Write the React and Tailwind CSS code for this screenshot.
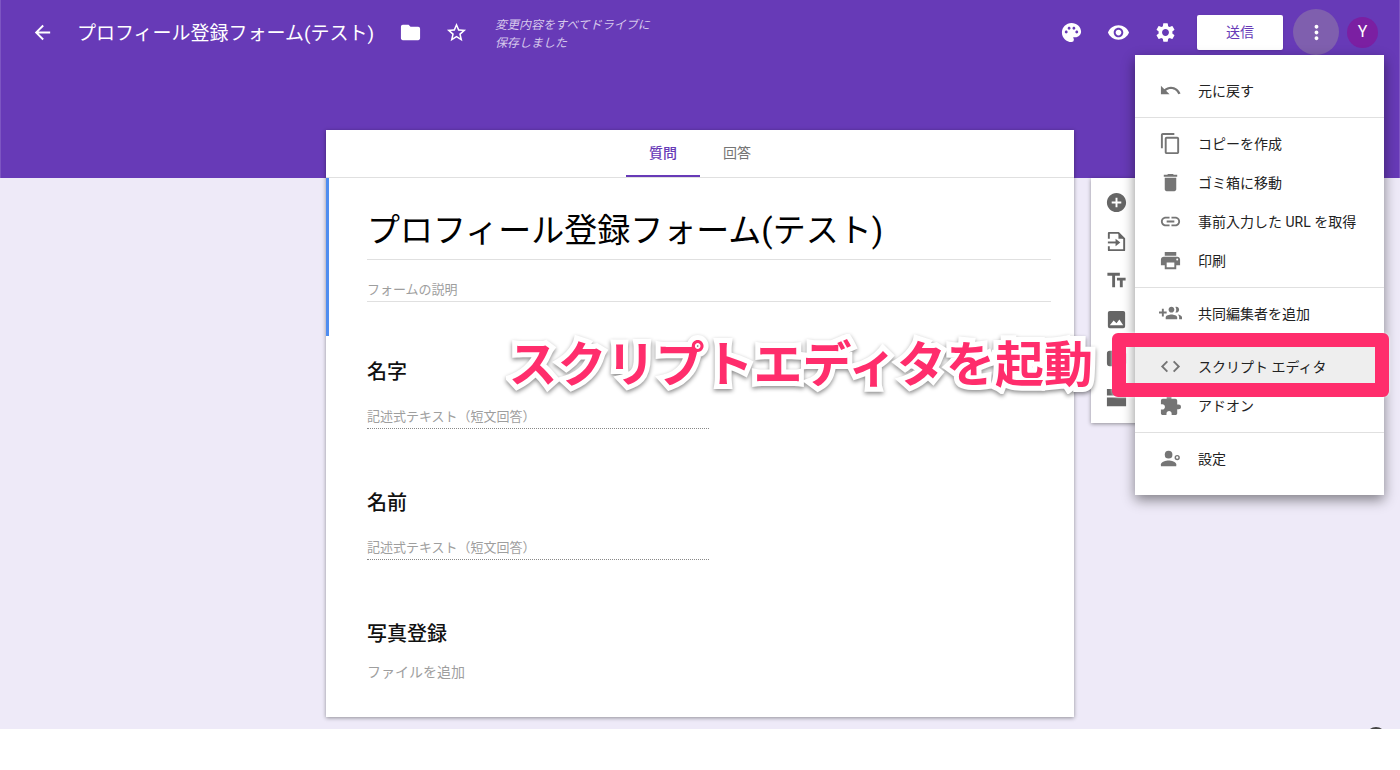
import React, { useState } from "react";
import {
    MdAddCircle,
    MdArrowBack,
    MdCode,
    MdContentCopy,
    MdDelete,
    MdExtension,
    MdFolder,
    MdHelp,
    MdLink,
    MdMoreVert,
    MdPalette,
    MdPrint,
    MdRemoveRedEye,
    MdSettings,
    MdStarBorder,
    MdTextFields,
    MdUndo,
} from "react-icons/md";

const FORM_TITLE = "プロフィール登録フォーム(テスト)";

const GroupAddIcon = ({ className }) => (
    <svg viewBox="0 0 24 24" fill="currentColor" className={className}>
        <path d="M8 10H5V7H3v3H0v2h3v3h2v-3h3v-2zm10 1c1.66 0 2.99-1.34 2.99-3S19.66 5 18 5c-.32 0-.63.05-.91.14.57.81.9 1.79.9 2.86s-.34 2.04-.9 2.86c.28.09.59.14.91.14zm-5 0c1.66 0 2.99-1.34 2.99-3S14.66 5 13 5c-1.66 0-3 1.34-3 3s1.34 3 3 3zm6.62 2.16c.83.73 1.38 1.66 1.38 2.84v2h3v-2c0-1.54-2.37-2.49-4.38-2.84zM13 13c-2 0-6 1-6 3v2h12v-2c0-2-4-3-6-3z" />
    </svg>
);

const PreferencesIcon = ({ className }) => (
    <svg viewBox="0 0 24 24" fill="currentColor" className={className}>
        <circle cx="10" cy="8" r="4" />
        <path d="M10 14c-2.67 0-8 1.34-8 4v2h16v-2c0-2.66-5.33-4-8-4z" />
        <circle cx="19" cy="11" r="2" fill="none" stroke="currentColor" strokeWidth="1.5" />
    </svg>
);

const ImportIcon = ({ className }) => (
    <svg viewBox="0 0 24 24" fill="none" stroke="currentColor" strokeWidth="2" className={className}>
        <path d="M4 9V3h10l6 6v12H4v-4" strokeLinejoin="round" />
        <path d="M14 3v6h6z" fill="currentColor" stroke="none" />
        <path d="M3 13h9" />
        <path d="M11 9l5 4-5 4z" fill="currentColor" stroke="none" />
    </svg>
);

const ImageIcon = ({ className }) => (
    <svg viewBox="0 0 24 24" fill="currentColor" className={className}>
        <path
            fillRule="evenodd"
            d="M5 3h14a2 2 0 0 1 2 2v14a2 2 0 0 1-2 2H5a2 2 0 0 1-2-2V5a2 2 0 0 1 2-2zm0 15h14l-4-6-3 4-3-3z"
        />
    </svg>
);

const VideoIcon = ({ className }) => (
    <svg viewBox="0 0 24 24" fill="currentColor" className={className}>
        <path fillRule="evenodd" d="M5 4h14a3 3 0 0 1 3 3v10a3 3 0 0 1-3 3H5a3 3 0 0 1-3-3V7a3 3 0 0 1 3-3zm5 4v8l6-4z" />
    </svg>
);

const SectionIcon = ({ className }) => (
    <svg viewBox="0 0 24 24" fill="currentColor" className={className}>
        <path d="M2 3h20v7H2zM2 12h20v9H2z" />
    </svg>
);

const tools = [
    { label: "質問を追加", icon: MdAddCircle },
    { label: "質問をインポート", icon: ImportIcon },
    { label: "タイトルと説明を追加", icon: MdTextFields },
    { label: "画像を追加", icon: ImageIcon },
    { label: "動画を追加", icon: VideoIcon },
    { label: "セクションを追加", icon: SectionIcon },
];

const menuGroups = [
    [{ label: "元に戻す", icon: MdUndo }],
    [
        { label: "コピーを作成", icon: MdContentCopy },
        { label: "ゴミ箱に移動", icon: MdDelete },
        { label: "事前入力した URL を取得", icon: MdLink },
        { label: "印刷", icon: MdPrint },
    ],
    [{ label: "共同編集者を追加", icon: GroupAddIcon }],
    [
        { label: "スクリプト エディタ", icon: MdCode, highlighted: true },
        { label: "アドオン", icon: MdExtension },
    ],
    [{ label: "設定", icon: PreferencesIcon }],
];

function Header() {
    const [title, setTitle] = useState(FORM_TITLE);

    return (
        <header className="flex h-16 items-center pl-[30px] pr-[21px] text-white">
            <div className="flex items-center gap-[23px]">
                <button aria-label="戻る">
                    <MdArrowBack className="size-[23px]" />
                </button>
                <input
                    aria-label="フォーム名"
                    value={title}
                    onChange={(e) => setTitle(e.target.value)}
                    className="w-[299px] bg-transparent pt-1 text-[19px] outline-none"
                />
                <button aria-label="フォルダに移動">
                    <MdFolder className="size-[23px]" />
                </button>
                <button aria-label="スターを付ける">
                    <MdStarBorder className="size-[23px]" />
                </button>
                <p className="ml-1 w-40 pt-1 text-xs leading-[18px] text-[#d6c8ec] italic">
                    変更内容をすべてドライブに保存しました
                </p>
            </div>
            <div className="ml-auto flex items-center">
                <div className="flex gap-6">
                    <button aria-label="テーマ">
                        <MdPalette className="size-[23px]" />
                    </button>
                    <button aria-label="プレビュー">
                        <MdRemoveRedEye className="size-[23px]" />
                    </button>
                    <button aria-label="設定">
                        <MdSettings className="size-[23px]" />
                    </button>
                </div>
                <button className="ml-5 h-[35px] w-[86px] rounded-xs bg-white text-sm text-[#673ab7] shadow">
                    送信
                </button>
                <button
                    aria-label="その他"
                    className="ml-[10px] flex size-[46px] items-center justify-center rounded-full bg-[#7f5fae]"
                >
                    <MdMoreVert className="size-[23px]" />
                </button>
                <button
                    aria-label="アカウント"
                    className="ml-2 size-[31px] rounded-full bg-[#7b1fa2] text-base"
                >
                    Y
                </button>
            </div>
        </header>
    );
}

function Question({ title }) {
    return (
        <label className="block h-[131px] pt-[21px] pl-[41px]">
            <span className="block text-xl leading-[30px] font-medium text-[#111]">{title}</span>
            <input
                placeholder="記述式テキスト（短文回答）"
                className="mt-4 block h-[26px] w-[342px] border-b border-dotted border-[#888] pt-[2px] text-[13px] outline-none placeholder:text-[#9e9e9e]"
            />
        </label>
    );
}

function FormCard() {
    const [title, setTitle] = useState(FORM_TITLE);
    const [activeTab, setActiveTab] = useState("questions");

    return (
        <div className="bg-white shadow-[0_1px_4px_rgba(0,0,0,0.4)]">
            <div className="flex h-12 justify-center border-b border-[#e0e0e0] text-sm">
                {[
                    ["questions", "質問"],
                    ["responses", "回答"],
                ].map(([id, label]) => (
                    <button
                        key={id}
                        onClick={() => setActiveTab(id)}
                        className={`w-[74px] border-b-2 ${
                            activeTab === id
                                ? "border-[#673ab7] font-medium text-[#673ab7]"
                                : "border-transparent text-[#757575]"
                        }`}
                    >
                        {label}
                    </button>
                ))}
            </div>
            <div className="border-l-3 border-[#4f8df0] pt-[25px] pr-[23px] pb-[34px] pl-[38px]">
                <input
                    aria-label="フォームのタイトル"
                    value={title}
                    onChange={(e) => setTitle(e.target.value)}
                    className="block h-[57px] w-full border-b border-[#e0e0e0] pb-[6px] text-[33px] text-black outline-none"
                />
                <input
                    aria-label="フォームの説明"
                    placeholder="フォームの説明"
                    className="mt-[18px] block h-6 w-full border-b border-[#e0e0e0] text-[13px] outline-none placeholder:text-[#9e9e9e]"
                />
            </div>
            <Question title="名字" />
            <Question title="名前" />
            <div className="pt-[21px] pb-[35px] pl-[41px]">
                <h2 className="text-xl leading-[30px] font-medium text-[#111]">写真登録</h2>
                <button className="mt-[13px] block text-sm text-[#9e9e9e]">ファイルを追加</button>
            </div>
        </div>
    );
}

function Toolbar() {
    return (
        <div className="mt-12 ml-[17px] flex w-[50px] flex-col self-start bg-white pt-[5px] pb-[6px] text-[#666] shadow-[0_1px_4px_rgba(0,0,0,0.4)]">
            {tools.map(({ label, icon: Icon }) => (
                <button key={label} aria-label={label} className="flex h-[39px] items-center justify-center">
                    <Icon className="size-[23px]" />
                </button>
            ))}
        </div>
    );
}

function MoreMenu() {
    return (
        <div
            role="menu"
            className="absolute top-[55px] right-4 w-[249px] bg-white pt-4 pb-[17px] text-sm text-[#222] shadow-[0_5px_12px_rgba(0,0,0,0.45)]"
        >
            {menuGroups.map((group, i) => (
                <div
                    key={i}
                    role="group"
                    className={i > 0 ? "mt-[7px] border-t border-[#e0e0e0] pt-[6px]" : ""}
                >
                    {group.map(({ label, icon: Icon, highlighted }) => (
                        <button
                            key={label}
                            role="menuitem"
                            className={`relative flex h-[39px] w-full items-center gap-4 pl-6 ${
                                highlighted ? "z-10 bg-[#eee]" : ""
                            }`}
                        >
                            <Icon className="size-[23px] text-[#757575]" />
                            {label}
                            {highlighted && (
                                <span className="pointer-events-none absolute -top-[14px] -right-[5px] -bottom-[11px] -left-[23px] rounded-md border-14 border-[#ff2d6c] shadow-[0_0_3px_rgba(255,255,255,0.9)]" />
                            )}
                        </button>
                    ))}
                </div>
            ))}
        </div>
    );
}

export default function App() {
    return (
        <div className="min-h-screen bg-white font-[Roboto,'Noto_Sans_CJK_JP',sans-serif]">
            <div className="relative overflow-hidden bg-[#eeeaf8] pb-3">
                <div className="h-[178px] border-x border-[#7d55c2] bg-[#673ab7]">
                    <Header />
                </div>
                <main className="-mt-12 grid grid-cols-[1fr_748px_1fr]">
                    <div />
                    <FormCard />
                    <Toolbar />
                </main>
                <MdHelp className="absolute right-3 -bottom-5 size-6 text-[#444]" />
                <MoreMenu />
                <p className="absolute top-[330px] right-[307px] text-[49px] leading-[72px] font-bold whitespace-nowrap text-[#ff2d6c] drop-shadow-[0_2px_2px_rgba(0,0,0,0.45)] [-webkit-text-stroke:10px_white] [paint-order:stroke_fill] [stroke-linejoin:round]">
                    スクリプトエディタを起動
                </p>
            </div>
        </div>
    );
}
